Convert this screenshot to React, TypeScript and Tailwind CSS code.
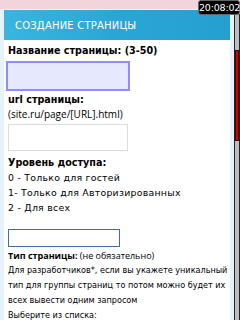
import React from "react";

const font = { fontFamily: '"DejaVu Sans", sans-serif' };
const openSans = { fontFamily: '"Open Sans", sans-serif' };

export default function App() {
  return (
    <div className="relative w-[240px] h-[320px] overflow-hidden bg-[#e6f3fc] text-black" style={font}>
      {/* top strip */}
      <div className="h-[9px] bg-[#f2d4dc]" />

      <div className="ml-[4px] mt-[1px] w-[226px] min-h-[320px] bg-white">
        {/* header */}
        <div className="h-[30px] flex items-center pl-[11px] bg-gradient-to-r from-[#3ab5e0] via-[#2aa6d6] to-[#259fd0] text-white text-[10px] tracking-[0.2px]">
          СОЗДАНИЕ СТРАНИЦЫ
        </div>

        <div className="flex flex-col px-[4px] pt-[3px] text-[8px] leading-[15px] whitespace-nowrap">
          <div className="font-bold text-[9.6px]">Название страницы: (3-50)</div>
          <div className="mt-[3px] ml-[-2px] w-[124px] h-[30px] bg-[#e6e8fe] border-2 border-[#8d8dfb]" />
          <div className="mt-[1px] font-bold text-[9.6px]">url страницы:</div>
          <div className="text-[10px]" style={openSans}>
            (site.ru/page/[URL].html)
          </div>
          <div className="mt-[2px] w-[120px] h-[27px] border border-[#dcdcdc]" />
          <div className="mt-[4px] font-bold text-[9.6px]">Уровень доступа:</div>
          <div className="text-[9.4px] tracking-[0.25px]">0 - Только для гостей</div>
          <div className="text-[9.4px] tracking-[0.25px]">1- Только для Авторизированных</div>
          <div className="text-[9.4px] tracking-[0.25px]">2 - Для всех</div>
          <div className="h-[14px]" />
          <div className="w-[112px] h-[18px] border border-[#3f6f9f]" />
          <div className="mt-[1px] text-[9px]" style={openSans}>
            <span className="font-bold">Тип страницы:</span> (не обязательно)
          </div>
          <div className="text-[8.1px]">Для разработчиков*, если вы укажете уникальный</div>
          <div className="text-[8.1px]">тип для группы страниц то потом можно будет их</div>
          <div className="text-[8.1px]">всех вывести одним запросом</div>
          <div className="text-[8.1px]">Выберите из списка:</div>
        </div>
      </div>

      {/* scrollbar */}
      <div className="absolute right-0 top-[14px] w-[6px] h-[306px] bg-[#bdbdbd] border-x border-[#222]">
        <div className="mt-[36px] h-[91px] bg-[#d80000] border border-[#400]" />
      </div>

      {/* clock */}
      <div className="absolute right-0 top-0 w-[42px] h-[15px] rounded-[3px] bg-black border border-[#666] text-white text-[9.5px] leading-[13px] text-center tracking-[-0.2px]">
        20:08:02
      </div>
    </div>
  );
}
